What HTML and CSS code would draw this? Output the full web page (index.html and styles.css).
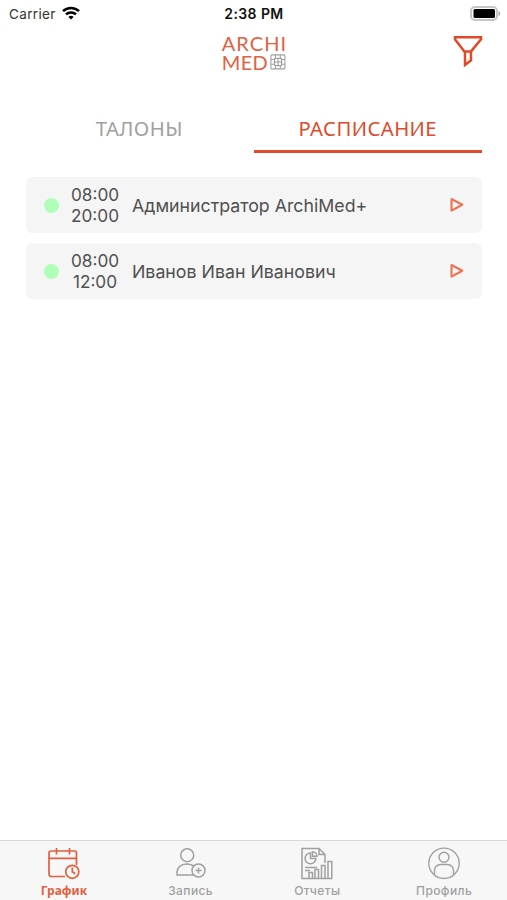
FILE: index.html
```html
<!DOCTYPE html>
<html lang="ru">
<head>
<meta charset="UTF-8" />
<meta name="viewport" content="width=device-width, initial-scale=1" />
<title>ArchiMed+</title>
<link rel="stylesheet" href="styles.css">
</head>

<body>
  <div class="status-bar">
    <div class="carrier">
      <span>Carrier</span>
      <svg class="wifi" width="18" height="14" viewBox="0 0 18 14" fill="none" stroke="#000" stroke-width="2.5">
        <path d="M1 5.2a11.5 11.5 0 0 1 16 0"/>
        <path d="M4 8.4a7.2 7.2 0 0 1 10 0"/>
        <path d="M9 13.6L6.4 11a3.7 3.7 0 0 1 5.2 0z" fill="#000" stroke="none"/>
      </svg>
    </div>
    <div class="time">2:38 PM</div>
    <svg class="battery" width="31" height="15" viewBox="0 0 31 15">
      <rect x="1" y="1" width="26" height="13" rx="4" fill="#fff" stroke="#c6c6c6" stroke-width="2"/>
      <rect x="3.5" y="3" width="21.5" height="9" rx="1.5" fill="#000"/>
      <path d="M28.5 5c2.3.8 2.3 4.2 0 5z" fill="#aaa"/>
    </svg>
  </div>

  <header class="header">
    <div class="logo">
      <div class="logo-top">ARCHI</div>
      <div class="logo-bottom">
        <span>MED</span>
        <svg width="16" height="16" viewBox="0 0 16 16" fill="none" stroke="#a0a0a0" stroke-width="1.1">
          <rect x=".9" y=".9" width="14" height="14" rx="1"/>
          <path d="M5.5 1v3.500M10.300 1v3.500M5.500 15v-3.500M10.300 15v-3.500M1 5.500h3.500M1 10.300h3.500M15 5.500h-3.500M15 10.300h-3.500M8 3.500v9M3.500 8h9M4.500 4.500h7v7h-7z"/>
        </svg>
      </div>
    </div>
    <svg class="filter" width="30" height="32" viewBox="0 0 30 32" fill="none" stroke="#e04a2b" stroke-width="2.5">
      <path d="M2 2.2h26v2L18 16.4h-6.600L2 4.200z"/>
      <path d="M12 16.4v13.500l6-4.600v-8.900"/>
    </svg>
  </header>

  <nav class="tabs">
    <div class="tab">ТАЛОНЫ</div>
    <div class="tab active">РАСПИСАНИЕ</div>
  </nav>

  <main class="list">
    <div class="card">
      <span class="dot"></span>
      <div class="hours">08:00<br>20:00</div>
      <div class="name">Администратор ArchiMed+</div>
      <svg class="arrow" width="14" height="16" viewBox="0 0 14 16" fill="none" stroke="#ee7352" stroke-width="2.1" stroke-linejoin="round">
        <path d="M1.500 2v11.600L12.300 7.800z"/>
      </svg>
    </div>
    <div class="card">
      <span class="dot"></span>
      <div class="hours">08:00<br>12:00</div>
      <div class="name">Иванов Иван Иванович</div>
      <svg class="arrow" width="14" height="16" viewBox="0 0 14 16" fill="none" stroke="#ee7352" stroke-width="2.1" stroke-linejoin="round">
        <path d="M1.500 2v11.600L12.300 7.800z"/>
      </svg>
    </div>
  </main>

  <footer class="tab-bar">
    <div class="item active">
      <!-- calendar -->
      <svg width="34" height="34" viewBox="0 0 34 34" fill="none" stroke="currentColor" stroke-width="1.7">
        <path d="M18 29.500H4.500a2.500 2.500 0 0 1-2.500-2.500V6a2 2 0 0 1 2-2h23.500a2 2 0 0 1 2 2v12M2 11.300h27.500M9.500 1v6.500M22.500 1v6.500"/>
        <circle cx="25.3" cy="24.8" r="6.5"/>
        <path d="M25.3 20.5v4.300l3 2"/>
      </svg>
      <span>График</span>
    </div>
    <div class="item">
      <!-- add person -->
      <svg width="34" height="34" viewBox="0 0 34 34" fill="none" stroke="currentColor" stroke-width="1.5">
        <circle cx="13.2" cy="8.2" r="6.5"/>
        <path d="M20 28H3v-2.500c0-5 4-8.500 9.500-8.500 3.500 0 5.900.8 7.700 2.400"/>
        <circle cx="24.5" cy="23.5" r="6.5"/>
        <path d="M24.5 20.500v6M21.500 23.500h6"/>
      </svg>
      <span>Запись</span>
    </div>
    <div class="item">
      <!-- report -->
      <svg width="34" height="34" viewBox="0 0 34 34" fill="none" stroke="currentColor" stroke-width="1.5">
        <path d="M25 16V7.500L19 1.500H2v30h30.500M19 1.500v6h6"/>
        <path d="M10.500 6a5.400 5.400 0 1 0 5.400 5.400h-5.400zM12.500 4.800v4.500H17A4.500 4.500 0 0 0 12.500 4.800z"/>
        <path d="M5 20.500h12M5 23.500h5"/>
        <path d="M9 31v-5.500h3.500V31M15 31v-8.500h3.500V31M21.500 31V18.500H25V31M28 31V14.500h3.800V31"/>
      </svg>
      <span>Отчеты</span>
    </div>
    <div class="item">
      <!-- profile -->
      <svg width="34" height="34" viewBox="0 0 34 34" fill="none" stroke="currentColor" stroke-width="1.4">
        <circle cx="17" cy="16.3" r="15.2"/>
        <circle cx="17" cy="10.2" r="5"/>
        <path d="M7.500 28v-4.500a6 6 0 0 1 6-6h7a6 6 0 0 1 6 6V28"/>
      </svg>
      <span>Профиль</span>
    </div>
  </footer>
</body>
</html>
```

FILE: styles.css
```css
* { box-sizing: border-box; margin: 0; padding: 0; }
body {
  font-family: Inter, 'Liberation Sans', sans-serif;
  background: #fff;
  display: flex; flex-direction: column;
  height: 100vh; overflow: hidden;
}
svg { display: block; flex: none; }

/* Status bar */
.status-bar {
  display: grid; grid-template-columns: 1fr auto 1fr; align-items: center;
  height: 27px; padding: 0 6px 0 9px;
  font-size: 13.5px; color: #111;
}
.carrier { display: flex; align-items: center; gap: 6px; color: #333; letter-spacing: .35px; }
.wifi { margin-top: -2px; }
.time { font-weight: 600; font-size: 14px; letter-spacing: .4px; margin-right: 2px; }
.battery { justify-self: end; }

/* Header */
.header {
  display: grid; grid-template-columns: 1fr auto 1fr;
  height: 80px; padding: 7px 24px 0;
}
.logo {
  grid-column: 2; margin-left: 2px;
  font-family: Lato, sans-serif; font-size: 20px; line-height: 19px;
  color: #e4603f;
}
.logo-top { letter-spacing: 1.1px; }
.logo-bottom { display: flex; align-items: center; gap: 2px; letter-spacing: .4px; }
.logo-bottom svg { margin-top: -2px; }
.filter { justify-self: end; margin-top: 1px; }

/* Tabs */
.tabs { display: flex; height: 46px; margin: 0 25px; }
.tab {
  flex: 1; text-align: center;
  font-family: 'Noto Sans', sans-serif; font-size: 20.3px; line-height: 43px; letter-spacing: .4px;
  color: #a0a0a0;
}
.tab.active { color: #dc4b2c; border-bottom: 3px solid #e04a2b; }

/* Schedule list */
.list {
  flex: 1; display: flex; flex-direction: column; gap: 10px;
  padding: 24px 25px 0 26px;
}
.card {
  display: flex; align-items: center;
  height: 56px; padding: 0 18px;
  background: #f5f5f5; border-radius: 6px;
  font-size: 17.75px; color: #505050;
}
.dot { width: 15px; height: 15px; border-radius: 50%; background: #afffb8; }
.hours { width: 48px; margin: 0 13px 0 12px; text-align: center; font-size: 17.2px; line-height: 21px; white-space: nowrap; }
.name { flex: 1; }

/* Bottom bar */
.tab-bar {
  display: flex; height: 60px;
  background: #f7f7f7; border-top: 1px solid #d9d9d9;
}
.item {
  flex: 1; display: flex; flex-direction: column; align-items: center;
  padding: 6px 0 0 1px; gap: 2px;
  font-size: 12px; font-weight: 500; line-height: 15px; letter-spacing: .4px;
  color: #a0a0a0;
}
.item.active {
  font-family: 'Noto Sans', sans-serif; font-weight: 700; letter-spacing: 0;
  color: #e2603f;
}
```
